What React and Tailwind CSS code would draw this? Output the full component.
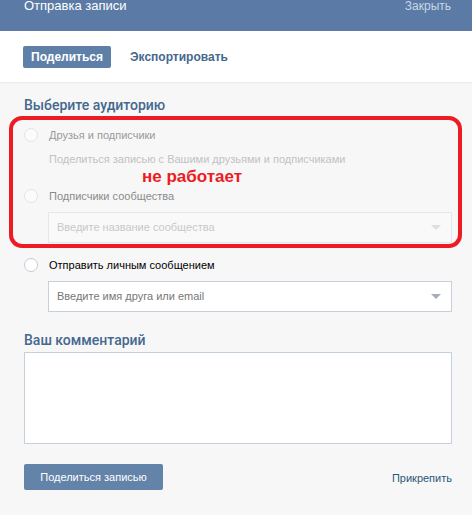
import { useState } from 'react'

const font = { fontFamily: '"Liberation Sans", Arial, sans-serif' }
const headFont = { fontFamily: 'Roboto, "Liberation Sans", sans-serif' }

function Radio({ disabled, label, labelClass }) {
    return (
        <div className="flex items-center h-[16px]">
            <span className={`w-[14px] h-[14px] rounded-full border ${disabled ? 'border-[#e1e5ea] bg-[#fbfbfb]' : 'border-[#c3ccd6] bg-white'}`} />
            <span className={`ml-[11px] text-[11px] ${labelClass}`}>{label}</span>
        </div>
    )
}

function Select({ placeholder, disabled }) {
    return (
        <div className={`ml-[24px] h-[31px] border flex items-center justify-between pl-[8px] pr-[10px] ${disabled ? 'border-[#e4e8ec] bg-[#f9f9f9]' : 'border-[#c5d0db] bg-white'}`}>
            <span className={`text-[11px] ${disabled ? 'text-[#c8c8c8]' : 'text-[#777]'}`}>{placeholder}</span>
            <span className={`w-0 h-0 border-l-[5px] border-r-[5px] border-t-[5px] border-l-transparent border-r-transparent ${disabled ? 'border-t-[#dcdfe3]' : 'border-t-[#a5adb7]'}`} />
        </div>
    )
}

export default function App() {
    const [tab] = useState('share')

    return (
        <div className="w-[472px] h-[515px] bg-[#f7f7f7] relative overflow-hidden" style={font}>
            {/* Header */}
            <div className="h-[31px] bg-[#5b7ba6] flex items-start justify-between px-[24px]">
                <span className="text-white text-[13px] leading-[14px] -mt-[1px]">Отправка записи</span>
                <span className="text-[#c9d6e6] text-[12px] leading-[14px] -mt-[1px] mr-[-3px]">Закрыть</span>
            </div>

            {/* Tabs */}
            <div className="h-[51px] bg-white flex items-center px-[23px] shadow-[0_1px_2px_rgba(0,0,0,0.06)]">
                <span className={`h-[22px] px-[8px] rounded-[2px] flex items-center text-[12px] font-bold ${tab === 'share' ? 'bg-[#5e80a8] text-white' : 'text-[#45688e]'}`}>Поделиться</span>
                <span className="ml-[19px] text-[12px] font-bold text-[#45688e]">Экспортировать</span>
            </div>

            <div className="px-[24px] pt-[15px] pr-[20px]">
                <h3 className="text-[14px] font-medium text-[#45688e] leading-[16px]" style={headFont}>Выберите аудиторию</h3>

                <div className="mt-[14px]">
                    <Radio disabled label="Друзья и подписчики" labelClass="text-[#9a9a9a]" />
                    <p className="ml-[25px] mt-[8px] text-[11px] leading-[16px] text-[#c2c2c2]">Поделиться записью с Вашими друзьями и подписчиками</p>
                </div>

                <div className="mt-[21px]">
                    <Radio disabled label="Подписчики сообщества" labelClass="text-[#8a8a8a]" />
                </div>
                <div className="mt-[8px]">
                    <Select disabled placeholder="Введите название сообщества" />
                </div>

                <div className="mt-[14px]">
                    <Radio label="Отправить личным сообщением" labelClass="text-black" />
                </div>
                <div className="mt-[8px]">
                    <Select placeholder="Введите имя друга или email" />
                </div>

                <h3 className="mt-[20px] text-[14px] font-medium text-[#45688e] leading-[16px]" style={headFont}>Ваш комментарий</h3>
                <textarea className="mt-[4px] block w-full h-[92px] bg-white border border-[#c5d0db] resize-none outline-none" />

                <div className="mt-[20px] flex items-center justify-between">
                    <button className="h-[26px] w-[139px] rounded-[2px] bg-[#6383a8] text-white text-[11px]">Поделиться записью</button>
                    <span className="text-[11px] text-[#2b587a] mt-[2px]">Прикрепить</span>
                </div>
            </div>

            {/* annotation overlay */}
            <div className="absolute left-[9px] top-[116px] w-[453px] h-[132px] border-[4px] border-[#ed1c24] rounded-[13px] pointer-events-none" />
            <span className="absolute left-[142px] top-[167px] text-[17px] leading-[20px] font-bold text-[#ed1c24]">не работает</span>
        </div>
    )
}
